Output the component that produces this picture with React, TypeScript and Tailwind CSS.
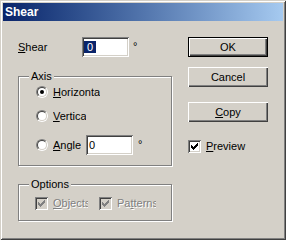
import type { ReactNode } from 'react'

// Win2000-style Shear dialog

const sunken = 'shadow-[inset_1px_1px_#808080,inset_-1px_-1px_#ffffff,inset_2px_2px_#404040,inset_-2px_-2px_#d4d0c8]'
const raised = 'shadow-[inset_1px_1px_#ffffff,inset_-1px_-1px_#404040,inset_-2px_-2px_#808080]'

function U({ children }: { children: ReactNode }) {
  return <span className="underline underline-offset-[1px]">{children}</span>
}

function Button({ children, isDefault }: { children: ReactNode; isDefault?: boolean }) {
  if (isDefault) {
    return (
      <div className="w-[80px] h-[20px] border border-black">
        <div className={`w-full h-full flex items-center justify-center text-[11px] text-black ${raised}`}>{children}</div>
      </div>
    )
  }
  return <div className={`w-[80px] h-[20px] flex items-center justify-center text-[11px] text-black ${raised}`}>{children}</div>
}

function Check({ disabled }: { disabled?: boolean }) {
  // classic 7x7 pixel check mark
  const cols = [2, 3, 4, 3, 2, 1, 0]
  return (
    <div className={`w-[13px] h-[13px] shrink-0 ${disabled ? 'bg-[#d4d0c8]' : 'bg-white'} ${sunken}`}>
      <svg width="13" height="13" viewBox="0 0 13 13" shapeRendering="crispEdges">
        {cols.map((top, i) => (
          <rect key={i} x={3 + i} y={3 + top} width="1" height="3" fill={disabled ? '#808080' : '#000000'} />
        ))}
      </svg>
    </div>
  )
}

function Radio({ checked }: { checked?: boolean }) {
  return (
    <div className="w-[12px] h-[12px] shrink-0 rounded-full border border-t-[#808080] border-l-[#808080] border-b-white border-r-white">
      <div className="w-full h-full rounded-full bg-white border border-t-[#404040] border-l-[#404040] border-b-[#d4d0c8] border-r-[#d4d0c8] flex items-center justify-center">
        {checked && <div className="w-[4px] h-[4px] rounded-full bg-black" />}
      </div>
    </div>
  )
}

function Group({ label, className, children }: { label: string; className: string; children: ReactNode }) {
  return (
    <div className={`relative w-[154px] border border-[#808080] shadow-[inset_1px_1px_#ffffff,1px_1px_#ffffff] ${className}`}>
      <span className="absolute left-[10px] top-[-7px] px-[2px] bg-[#d4d0c8] text-[11px] leading-[13px] text-black">{label}</span>
      {children}
    </div>
  )
}

export default function App() {
  return (
    <div className="w-[286px] h-[240px] bg-[#d4d0c8] p-[3px] font-['Liberation_Sans',Arial,sans-serif] shadow-[inset_1px_1px_#d4d0c8,inset_-1px_-1px_#404040,inset_2px_2px_#ffffff,inset_-2px_-2px_#808080]">
      <div className="h-[18px] bg-linear-to-r from-[#0a246a] to-[#a6caf0] flex items-center pl-[2px] text-white font-bold text-[12px]">Shear</div>

      <div className="flex pl-[15px] pt-[16px]">
        {/* left column */}
        <div className="w-[155px]">
          <div className="flex items-center h-[20px]">
            <span className="w-[64px] text-[11px] text-black">
              <U>S</U>hear
            </span>
            <div className={`w-[47px] h-[20px] bg-white flex items-center pl-[2px] ${sunken}`}>
              <span className="bg-[#0a246a] text-white text-[11px] leading-[12px] px-[3px]">0</span>
            </div>
            <span className="ml-[4px] self-start mt-[1px] text-[11px] text-black">°</span>
          </div>

          <Group label="Axis" className="mt-[19px] h-[90px]">
            <div className="pt-[9px] pl-[17px] flex flex-col text-[11px] text-black">
              <div className="h-[12px] flex items-center gap-[5px]">
                <Radio checked />
                <span className="w-[47px] overflow-hidden whitespace-nowrap leading-[13px]">
                  <U>H</U>orizontal
                </span>
              </div>
              <div className="mt-[12px] h-[12px] flex items-center gap-[5px]">
                <Radio />
                <span className="w-[33px] overflow-hidden whitespace-nowrap leading-[13px]">
                  <U>V</U>ertical
                </span>
              </div>
              <div className="mt-[13px] h-[20px] flex items-center gap-[5px]">
                <Radio />
                <span className="w-[28px] overflow-hidden whitespace-nowrap leading-[13px]">
                  <U>A</U>ngle
                </span>
                <div className={`w-[47px] h-[20px] bg-white flex items-center pl-[3px] ${sunken}`}>0</div>
                <span className="self-start mt-[1px]">°</span>
              </div>
            </div>
          </Group>

          <Group label="Options" className="mt-[18px] h-[37px]">
            <div className="pt-[12px] pl-[16px] flex items-center text-[11px] text-[#808080] [text-shadow:1px_1px_#ffffff]">
              <Check disabled />
              <span className="ml-[5px] w-[35px] overflow-hidden whitespace-nowrap leading-[13px]">
                <U>O</U>bjects
              </span>
              <div className="ml-[11px]">
                <Check disabled />
              </div>
              <span className="ml-[5px] w-[39px] overflow-hidden whitespace-nowrap leading-[13px]">
                Pa<U>t</U>terns
              </span>
            </div>
          </Group>
        </div>

        {/* right column */}
        <div className="ml-[15px] w-[80px] flex flex-col">
          <Button isDefault>OK</Button>
          <div className="mt-[10px]">
            <Button>Cancel</Button>
          </div>
          <div className="mt-[15px]">
            <Button>
              <span>
                <U>C</U>opy
              </span>
            </Button>
          </div>
          <div className="mt-[16px] flex items-center gap-[5px] text-[11px] text-black">
            <Check />
            <span>
              <U>P</U>review
            </span>
          </div>
        </div>
      </div>
    </div>
  )
}
